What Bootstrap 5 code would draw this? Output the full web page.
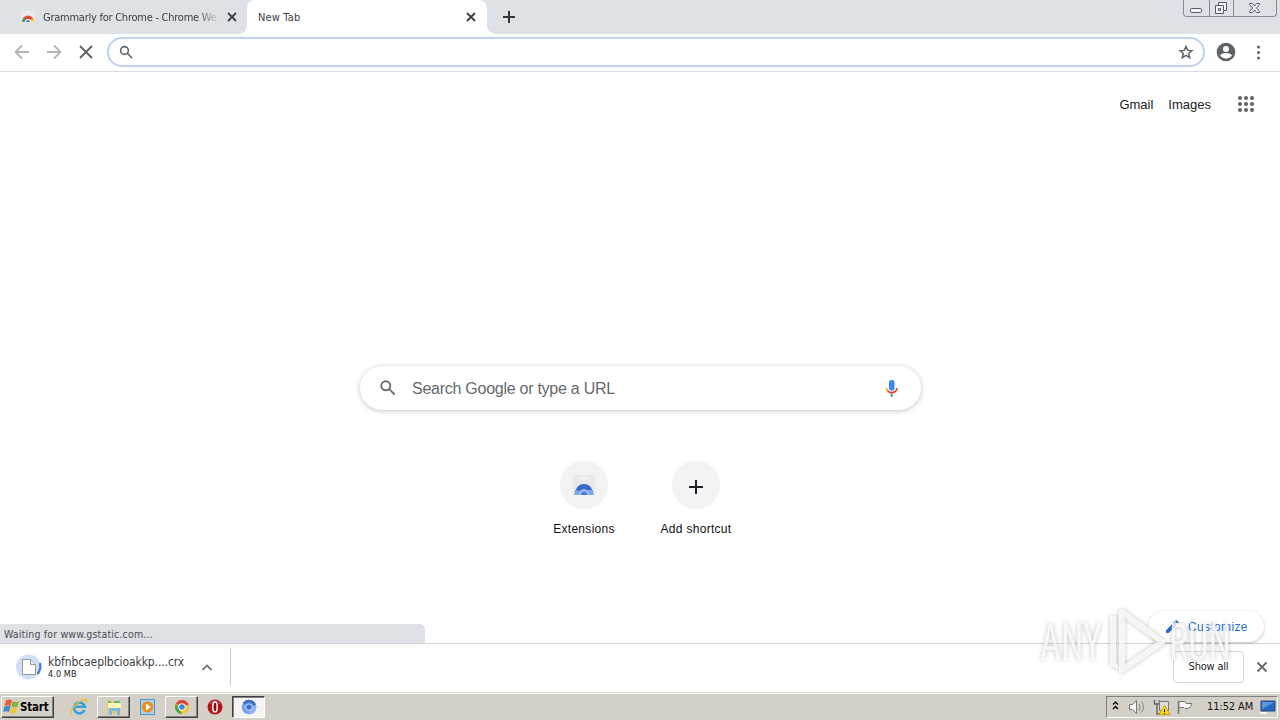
<!DOCTYPE html>
<html lang="en">
<head>
  <meta charset="UTF-8">
  <meta name="viewport" content="width=device-width, initial-scale=1.0">
  <title>New Tab</title>
  <!-- Bootstrap CSS -->
  <link href="https://cdn.jsdelivr.net/npm/bootstrap@5.3.1/dist/css/bootstrap.min.css" rel="stylesheet">
  <style>
    body {
      height: 720px;
      overflow: hidden;
      background: #fff;
      color: #3c4043;
      font-family: "DejaVu Sans Condensed", "DejaVu Sans", sans-serif;
      font-stretch: condensed;
      font-size: 11px;
      line-height: 16px;
      white-space: nowrap;
    }
    svg { display: block; flex-shrink: 0; }

    /* Tab strip */
    .tab-strip { height: 34px; background: #dee1e6; }
    .tab-idle { width: 247px; padding-left: 20px; }
    .tab-idle .tab-text {
      width: 176px;
      margin-left: 7px;
      padding-top: 1px;
      letter-spacing: -.25px;
      overflow: hidden;
      -webkit-mask-image: linear-gradient(90deg, #000 88%, transparent);
    }
    .tab-open { width: 240px; background: #fff; border-radius: 8px 8px 0 0; padding: 0 11px; }
    .tab-open span { padding-top: 1px; letter-spacing: .15px; }
    .tab-open::before, .tab-open::after {
      content: "";
      position: absolute;
      bottom: 0;
      width: 8px;
      height: 8px;
    }
    .tab-open::before { left: -8px; background: radial-gradient(circle at 0 0, transparent 7.5px, #fff 8px); }
    .tab-open::after { right: -8px; background: radial-gradient(circle at 100% 0, transparent 7.5px, #fff 8px); }
    .win-buttons { width: 94px; height: 17px; border: 1px solid #858b95; border-top: 0; border-radius: 0 0 4px 4px; margin-right: 3px; }
    .win-buttons svg { height: 16px; }

    /* Toolbar */
    .tool-bar { height: 38px; border-bottom: 1px solid #dadce0; padding: 3px 12px 4px; }
    .address-box { width: 1098px; height: 30px; border: 2px solid #bcd2ee; border-radius: 15px; margin-left: 11px; padding: 0 9px; }

    /* Page */
    .page { height: 571px; font-family: "Liberation Sans", Arial, sans-serif; color: #202124; }
    .top-links { height: 64px; padding-right: 26px; font-size: 13px; color: #222; }
    .top-links span { padding-top: 1px; }
    .search-box {
      width: 561px;
      height: 44px;
      margin: 230px auto 0 360px;
      padding: 0 19px 0 18px;
      border-radius: 22px;
      box-shadow: 0 1px 4px 1px rgba(60,64,67,.22);
      color: #66696d;
      font-size: 16px;
    }
    .search-box span { margin-left: 14px; padding-top: 1px; letter-spacing: -.26px; }
    .shortcuts { margin-top: 51px; margin-left: 528px; font-size: 12px; color: #111; letter-spacing: .3px; }
    .shortcut { width: 112px; }
    .shortcut-icon { width: 48px; height: 48px; border-radius: 50%; background: #f1f3f4; margin-bottom: 12px; }
    .status-bubble { left: 0; bottom: 0; width: 425px; height: 19px; background: #dee1e6; border-radius: 0 5px 0 0; padding: 2px 4px; font-family: "DejaVu Sans Condensed", sans-serif; font-size: 10.5px; letter-spacing: .17px; color: #484c50; }
    .customize { right: 16px; bottom: 1px; width: 116px; height: 31px; border-radius: 16px; background: #fff; box-shadow: 0 1px 3px rgba(60,64,67,.35); color: #2a6fd0; font-size: 12px; letter-spacing: .35px; padding-left: 17px; }

    /* Download shelf */
    .shelf { height: 49px; border-top: 1px solid #d4d6d9; padding: 0 12px 2px 15px; }
    .file-name { font-size: 12px; line-height: 13px; letter-spacing: -.08px; }
    .file-size { font-size: 9px; line-height: 10px; color: #222; letter-spacing: .1px; }
    .shelf-split { width: 1px; height: 38px; background: #c9cbce; }
    .show-all { width: 71px; height: 32px; border: 1px solid #d6d8dc; border-radius: 4px; background: #fff; color: #222; font-size: 11px; letter-spacing: -.2px; padding: 0; }

    /* Taskbar */
    .task-bar { height: 28px; background: #d4d0c8; border-top: 1px solid #d9d8d0; box-shadow: inset 0 1px #fff; padding: 2px 2px 1px 1px; }
    .raised { height: 22px; border: 1px solid; border-color: #fff #404040 #404040 #fff; box-shadow: inset -1px -1px #808080; }
    .start { width: 53px; font-weight: bold; font-size: 11.5px; color: #000; letter-spacing: -.2px; }
    .task { width: 33px; }
    .pressed { background: #f5f4f1; border-color: #404040 #fff #fff #404040; box-shadow: inset 1px 1px #808080; }
    .tray { width: 172px; height: 22px; border: 1px solid; border-color: #808080 #fff #fff #808080; color: #111; }
    .clock { margin-left: 2px; letter-spacing: -.1px; }

    .stamp { left: 1034px; top: 604px; pointer-events: none; filter: drop-shadow(0 0 2px rgba(0,0,0,.3)); }
    .stamp text { font-family: "Roboto", sans-serif; font-size: 52px; font-weight: 400; }
  </style>
</head>
<body class="d-flex flex-column position-relative">

  <!-- Tabs -->
  <div class="tab-strip d-flex flex-shrink-0">
    <div class="tab-idle d-flex align-items-center">
      <svg width="16" height="16" viewBox="0 0 16 16"><path d="M1 2h14v12H1z" fill="#e9ebed"/><path d="M5 4q3-3 6 0" fill="none" stroke="#f8f8f8"/><path d="M2 13a6 6.500 0 0 1 12 0z" fill="#df493c"/><path d="M2 13q0-3 2-4.500L6.500 13z" fill="#40a65c"/><path d="M10 13l1-3h2.500q.5 1 .5 3z" fill="#f9ce3f"/><path d="M5 13a3 3 0 0 1 6 0z" fill="#fff"/><path d="M6 13a2 2 0 0 1 4 0z" fill="#437fd9"/></svg>
      <span class="tab-text">Grammarly for Chrome - Chrome We</span>
      <svg width="16" height="16" viewBox="0 0 16 16" class="ms-1"><path d="M5 4l8 8M13 4l-8 8" stroke="#3c4043" stroke-width="1.800"/></svg>
    </div>
    <div class="tab-open d-flex align-items-center justify-content-between position-relative">
      <span>New Tab</span>
      <svg width="10" height="10" viewBox="0 0 10 10"><path d="M1 1l8 8M9 1l-8 8" stroke="#3c4043" stroke-width="1.800"/></svg>
    </div>
    <svg width="44" height="34" viewBox="0 0 44 34"><path d="M22 11v12M16 17h12" stroke="#33373c" stroke-width="2"/></svg>
    <div class="win-buttons d-flex ms-auto">
      <svg width="25" viewBox="0 0 25 16"><rect x="6.500" y="8.500" width="11" height="4" rx="1" fill="#f3f4f6" stroke="#555b66"/></svg>
      <svg width="25" viewBox="0 0 25 16"><path d="M.5 0v16M24.500 0v16" stroke="#858b95"/><path d="M9.500 2.500h8v8h-3v3h-8v-8h3z" fill="#f3f4f6" stroke="#555b66"/><path d="M9.500 5.500h5v5M9.500 8.500h2v2h-2z" fill="none" stroke="#555b66"/></svg>
      <svg width="42" viewBox="0 0 42 16"><path d="M15.500 3.500h3l2 2.500 2-2.500h3v1L22.500 8l3 3.500v1h-3l-2-2.500-2 2.500h-3v-1l3-3.500-3-3.500z" fill="#f3f4f6" stroke="#555b66"/></svg>
    </div>
  </div>

  <!-- Toolbar -->
  <div class="tool-bar d-flex align-items-center flex-shrink-0">
    <svg width="20" height="20" viewBox="0 0 20 20" fill="none" stroke="#b4b5b7" stroke-width="1.800"><path d="M17 10H4M10 3.500L3.500 10l6.500 6.500"/></svg>
    <svg width="20" height="20" viewBox="0 0 20 20" fill="none" stroke="#b4b5b7" stroke-width="1.800" style="margin-left: 12px"><path d="M3 10h13M10 3.500l6.500 6.500-6.500 6.500"/></svg>
    <svg width="20" height="20" viewBox="0 0 20 20" fill="none" stroke="#5f6368" stroke-width="1.900" style="margin-left: 12px"><path d="M4 4l12 12M16 4L4 16"/></svg>
    <div class="address-box d-flex align-items-center justify-content-between">
      <svg width="16" height="16" viewBox="0 0 16 16" fill="none" stroke="#5f6368" stroke-width="1.600"><circle cx="6.500" cy="6.500" r="3.900"/><path d="M9.300 9.300L14 14"/></svg>
      <svg width="16" height="16" viewBox="0 0 16 16" fill="none" stroke="#5f6368" stroke-width="1.500"><path d="M8 2.500l1.700 3.900 4.200.3-3.200 2.800 1 4.100L8 11.400l-3.700 2.200 1-4.100-3.200-2.800 4.200-.3z"/></svg>
    </div>
    <svg width="22" height="22" viewBox="0 0 22 22" style="margin-left: 10px"><circle cx="11" cy="11" r="9.300" fill="#5f6368"/><circle cx="11" cy="8" r="3" fill="#fff"/><path d="M5 14.500q1.500-2.500 6-2.500t6 2.500a7.300 7.300 0 0 1-12 0z" fill="#fff"/></svg>
    <svg width="20" height="20" viewBox="0 0 20 20" fill="#5f6368" class="ms-auto"><circle cx="10.500" cy="5" r="1.500"/><circle cx="10.500" cy="10.500" r="1.500"/><circle cx="10.500" cy="16" r="1.500"/></svg>
  </div>

  <!-- New tab page -->
  <main class="page position-relative flex-shrink-0">
    <div class="top-links d-flex align-items-center justify-content-end">
      <span>Gmail</span>
      <span style="margin: 0 27px 0 15px">Images</span>
      <svg width="16" height="16" viewBox="0 0 16 16" fill="#5f6368"><circle cx="2" cy="2" r="2"/><circle cx="8" cy="2" r="2"/><circle cx="14" cy="2" r="2"/><circle cx="2" cy="8" r="2"/><circle cx="8" cy="8" r="2"/><circle cx="14" cy="8" r="2"/><circle cx="2" cy="14" r="2"/><circle cx="8" cy="14" r="2"/><circle cx="14" cy="14" r="2"/></svg>
    </div>
    <div class="search-box d-flex align-items-center">
      <svg width="20" height="20" viewBox="0 0 20 20" fill="none" stroke="#696c70" stroke-width="1.900"><circle cx="7.800" cy="7.800" r="4.500"/><path d="M11.200 11.200l5.500 5.500"/></svg>
      <span>Search Google or type a URL</span>
      <svg width="20" height="20" viewBox="0 0 20 20" class="ms-auto"><rect x="7" y="2" width="5.500" height="10.500" rx="2" fill="#4285f4"/><path d="M4.400 10q.3 2 1.500 3.200" stroke="#f4b400" stroke-width="1.700" fill="none"/><path d="M5.700 13q4 3.500 8 0 1.200-1 1.400-3" stroke="#ea4335" stroke-width="1.700" fill="none"/><path d="M9.700 15.500V19" stroke="#34a853" stroke-width="1.800"/></svg>
    </div>
    <div class="shortcuts d-flex">
      <div class="shortcut d-flex flex-column align-items-center">
        <div class="shortcut-icon d-flex align-items-center justify-content-center">
          <svg width="24" height="24" viewBox="0 0 24 24"><path d="M1 2h22v20H1z" fill="#e8e9ea"/><path d="M7 7q5-4 10 0" stroke="#f4f4f4" stroke-width="2" fill="none"/><path d="M2.500 22a9.500 11 0 0 1 19 0z" fill="#3969c6"/><path d="M2.500 22q0-3 1.500-5l5 1v4zM15 17h5.500q1 2 .9 5H14z" fill="#7ca6ee"/><path d="M7 22a5 6 0 0 1 10 0z" fill="#9dbef6"/><path d="M9 22a3 3.500 0 0 1 6 0z" fill="#4a7fde"/></svg>
        </div>
        <span>Extensions</span>
      </div>
      <div class="shortcut d-flex flex-column align-items-center">
        <div class="shortcut-icon d-flex align-items-center justify-content-center pt-1">
          <svg width="16" height="16" viewBox="0 0 16 16"><path d="M8 1v14M1 8h14" stroke="#202124" stroke-width="2"/></svg>
        </div>
        <span>Add shortcut</span>
      </div>
    </div>
    <div class="customize position-absolute d-flex align-items-center">
      <svg width="16" height="16" viewBox="0 0 16 16" fill="#2a6fd0"><path d="M1 11.300L9.300 3 12 5.700 3.700 14H1zM10 2.300l1.300-1.300L14 3.700 12.700 5z"/></svg>
      <span style="margin-left: 7px; padding-top: 1px">Customize</span>
    </div>
    <div class="status-bubble position-absolute">Waiting for www.gstatic.com...</div>
  </main>

  <!-- Downloads -->
  <div class="shelf d-flex align-items-center flex-shrink-0">
    <svg width="28" height="28" viewBox="0 0 28 28"><circle cx="13.500" cy="14" r="12.500" fill="#d2e0f7"/><path d="M25 10q1.500 6-2.500 11" stroke="#3f7bd0" stroke-width="2.200" fill="none"/><path d="M7.500 6.500h8l5 5v10h-13z" fill="#fffefb" stroke="#9a9a94"/><path d="M15.500 6.500v5h5" fill="#eeeeea" stroke="#9a9a94"/></svg>
    <div style="margin-left: 5px; width: 137px">
      <div class="file-name">kbfnbcaeplbcioakkp....crx</div>
      <div class="file-size">4.0 MB</div>
    </div>
    <svg width="14" height="14" viewBox="0 0 14 14" style="margin: 0 16px 0 15px"><path d="M2.500 10L7 5.500l4.500 4.500" fill="none" stroke="#66696d" stroke-width="1.700"/></svg>
    <div class="shelf-split"></div>
    <button type="button" class="show-all ms-auto">Show all</button>
    <svg width="12" height="12" viewBox="0 0 12 12" style="margin-left: 12px"><path d="M1.500 1.500l9 9M10.500 1.500l-9 9" stroke="#66696d" stroke-width="1.800"/></svg>
  </div>

  <!-- Taskbar -->
  <div class="task-bar d-flex align-items-center flex-shrink-0">
    <div class="raised start d-flex align-items-center">
      <svg width="18" height="18" viewBox="0 0 18 18"><path d="M4 2.500q3-2 6 0L8.500 8q-3-1.500-6 0z" fill="#e7602a"/><path d="M10.500 3q3 2 6.500 0l-1.500 5.500q-3 2-6 0z" fill="#80b544"/><path d="M2.500 8.500q3-1.500 6 0L7 14q-3-1.500-6 0z" fill="#438ccb"/><path d="M9.500 9q3 2 6 0L14 14.500q-3 2-6 0z" fill="#f3c62f"/></svg>
      <span>Start</span>
    </div>
    <svg width="18" height="18" viewBox="0 0 18 18" style="margin: 0 9px 0 16px"><path d="M14.500 12A5.500 5.500 0 1 1 14.800 8.800H5" fill="none" stroke="#35a0dc" stroke-width="2.600"/><path d="M2 15.500C-1 12 11-1 16.500 2q1 1-.5 3" fill="none" stroke="#efbd37" stroke-width="1.400"/></svg>
    <div class="raised task d-flex align-items-center justify-content-center">
      <svg width="18" height="18" viewBox="0 0 18 18"><path d="M2 2h5l1 2h8v12H2z" fill="#e8ca70"/><path d="M3 5h13v5H3z" fill="#fff4b5"/><path d="M3 4h3M9 4h6" stroke="#6eb877" stroke-width="2"/><path d="M4 17v-7h11v7h-3v-4H7v4z" fill="#77b9e4"/></svg>
    </div>
    <svg width="18" height="18" viewBox="0 0 18 18" style="margin: 0 8px 0 9px"><path d="M1.500 1.500h14v15h-14z" fill="#a9d2ed" stroke="#4b93c7"/><circle cx="8.500" cy="9" r="5.700" fill="#ef8b1d"/><path d="M7 5.500l5 3.500-5 3.500z" fill="#fff"/></svg>
    <div class="raised task d-flex align-items-center justify-content-center">
      <svg width="16" height="16" viewBox="0 0 16 16"><circle cx="8" cy="8" r="7" fill="#f3c432"/><path d="M8 8L2 4.400A7 7 0 0 1 14.700 6H8z" fill="#dd4637"/><path d="M2 4.400L6 11l2 4A7 7 0 0 1 2 4.400z" fill="#45a756"/><circle cx="8" cy="8" r="3.700" fill="#fff"/><circle cx="8" cy="8" r="2.800" fill="#4285d8"/></svg>
    </div>
    <svg width="16" height="16" viewBox="0 0 16 16" style="margin: 0 10px 0 9px"><circle cx="8" cy="8" r="7.500" fill="#b41218"/><path d="M3 5q5-6 10 0" stroke="#e56a69" fill="none"/><ellipse cx="8" cy="8" rx="2.200" ry="5" fill="#8b080c" stroke="#fff" stroke-width="1.500"/></svg>
    <div class="raised task pressed d-flex align-items-center justify-content-center" style="margin-left: -1px">
      <svg width="16" height="16" viewBox="0 0 16 16"><circle cx="8" cy="8" r="7.300" fill="#719fea"/><path d="M8 8L2 4A7.300 7.300 0 0 1 15 6z" fill="#4270c5"/><path d="M8 8l7-2a7.300 7.300 0 0 1-7 9.300z" fill="#91b6f2"/><circle cx="8" cy="8" r="3.800" fill="#b7d0fa"/><circle cx="8" cy="8" r="2.600" fill="#396dca"/></svg>
    </div>
    <div class="tray d-flex align-items-center ms-auto">
      <svg width="98" height="20" viewBox="0 0 98 20"><path d="M6 7.500L8.500 5 11 7.500M6 12l2.500-2.500L11 12" fill="none" stroke="#111" stroke-width="1.500"/><path d="M22.500 7.500h3l4-4v13l-4-4h-3z" fill="#f7f7f7" stroke="#777"/><path d="M32 7q2.500 3.500 0 7M34.500 4.500q4 5.500 0 11" stroke="#888" fill="none"/><path d="M47.500 3v4h5V3M50 7v10h4" fill="none" stroke="#666" stroke-width="1.400"/><path d="M52.500 4.500h9v9h-9z" fill="#ddd" stroke="#777"/><path d="M52 17.500l5.500-9 5.500 9z" fill="#ffdb1d" stroke="#c6a500"/><path d="M57.500 12v3M57.500 16v1" stroke="#222"/><path d="M71.500 17V4" stroke="#777" stroke-width="1.500"/><path d="M72 4.500h6l1 2h6q-1 4-4 5h-3l-1-1h-5z" fill="#fafafa" stroke="#777"/></svg>
      <span class="clock">11:52 AM</span>
      <svg width="18" height="18" viewBox="0 0 18 18" class="ms-auto"><path d="M2 3h14v10H2z" fill="#2869bd" stroke="#244c82"/><path d="M3 4h12L3 11z" fill="#5c9ae0"/><path d="M1 15h7" stroke="#f5f5f5" stroke-width="2"/></svg>
    </div>
  </div>

  <!-- Watermark -->
  <svg class="stamp position-absolute" width="204" height="74" viewBox="0 0 204 74">
    <g fill="#fff" fill-opacity=".8">
      <text x="6" y="56" textLength="62" lengthAdjust="spacingAndGlyphs">ANY</text>
      <text x="135" y="56" textLength="62" lengthAdjust="spacingAndGlyphs">RUN</text>
      <path d="M76 12h6v46l4 8-10-5z"/>
      <path d="M88 8v58l40-28z" fill="none" stroke="#fff" stroke-opacity=".8" stroke-width="6" stroke-linejoin="round"/>
    </g>
  </svg>

  <!-- Bootstrap JS -->
  <script src="https://cdn.jsdelivr.net/npm/bootstrap@5.3.1/dist/js/bootstrap.bundle.min.js"></script>
</body>
</html>
